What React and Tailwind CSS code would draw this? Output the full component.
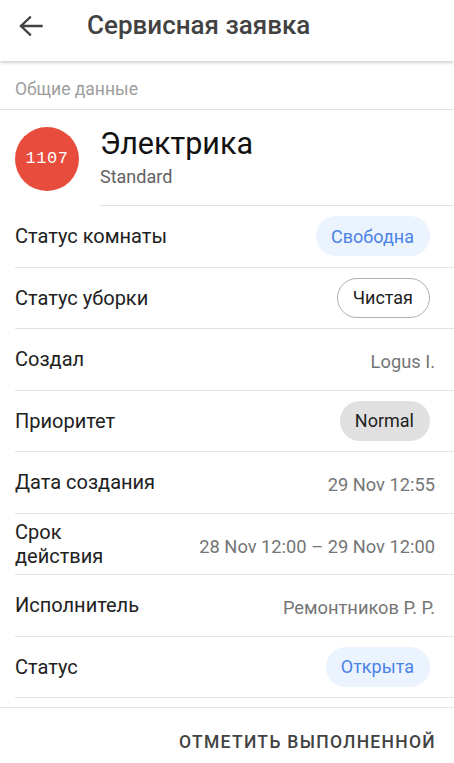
import React from "react";

const font = { fontFamily: "Roboto, 'Noto Sans', sans-serif" };

function Row({ label, children, tall }) {
  return (
    <div className="flex h-[61.5px] items-center justify-between border-b border-[#e3e3e3] pr-[19px]">
      <div className={"text-[20px] leading-[24px] text-[#212121] " + (tall ? "w-[120px]" : "")}>{label}</div>
      {children}
    </div>
  );
}

function Value({ children }) {
  return <div className="pt-[5px] text-[18.3px] text-[#757575]">{children}</div>;
}

function Chip({ children, variant }) {
  const cls =
    variant === "blue"
      ? "bg-[#ebf3fe] text-[#4a82e6]"
      : variant === "outline"
      ? "border border-[#b0b0b0] text-[#212121] bg-white"
      : "bg-[#e0e0e0] text-[#212121]";
  return (
    <div className={"mr-[5px] flex h-[40px] items-center rounded-full pl-[15px] pr-[16px] text-[18px] " + cls}>
      {children}
    </div>
  );
}

export default function App() {
  return (
    <div className="relative flex h-[763px] w-[454px] flex-col overflow-hidden bg-white" style={font}>
      <div className="relative z-10 flex h-[61px] shrink-0 items-center bg-white pb-[10px] shadow-[0_2px_3px_rgba(0,0,0,0.18)]">
        <svg className="ml-[18px]" width="26" height="24" viewBox="0 0 26 24" fill="none">
          <path d="M3 12H23.5M12 3.5L3 12l9 8.5" stroke="#424242" strokeWidth="2.3" strokeLinecap="square" />
        </svg>
        <div className="ml-[43px] text-[26px] font-medium text-[#424242]">Сервисная заявка</div>
      </div>
      <div className="flex h-[49px] shrink-0 items-center border-b border-[#e0e0e0] pl-[15px] pt-[9px] text-[17.5px] text-[#9e9e9e]">
        Общие данные
      </div>
      <div className="flex h-[96px] shrink-0">
        <div className="mt-[17px] ml-[15px] flex h-[64px] w-[64px] items-center justify-center rounded-full bg-[#e74c3c]">
          <span className="text-[17px] tracking-[0.5px] text-white" style={{ fontFamily: "'Liberation Mono', 'DejaVu Sans Mono', monospace" }}>1107</span>
        </div>
        <div className="ml-[21px] flex flex-1 flex-col border-b border-[#e0e0e0] pt-[16px]">
          <div className="text-[30.5px] leading-[36px] text-[#111]">Электрика</div>
          <div className="mt-[4px] text-[18px] leading-[22px] text-[#616161]">Standard</div>
        </div>
      </div>
      <div className="ml-[15px] flex flex-col">
        <Row label="Статус комнаты"><Chip variant="blue">Свободна</Chip></Row>
        <Row label="Статус уборки"><Chip variant="outline">Чистая</Chip></Row>
        <Row label="Создал"><Value>Logus I.</Value></Row>
        <Row label="Приоритет"><Chip>Normal</Chip></Row>
        <Row label="Дата создания"><Value>29 Nov 12:55</Value></Row>
        <Row label="Срок действия" tall><Value>28 Nov 12:00 – 29 Nov 12:00</Value></Row>
        <Row label="Исполнитель"><Value>Ремонтников Р. Р.</Value></Row>
        <Row label="Статус"><Chip variant="blue">Открыта</Chip></Row>
      </div>
      <div className="mt-auto flex h-[56px] items-center justify-end border-t border-[#e6e6e6] pr-[18px] pt-[13px]">
        <div className="text-[17.5px] font-medium tracking-[1.3px] text-[#424242]">ОТМЕТИТЬ ВЫПОЛНЕННОЙ</div>
      </div>
    </div>
  );
}
